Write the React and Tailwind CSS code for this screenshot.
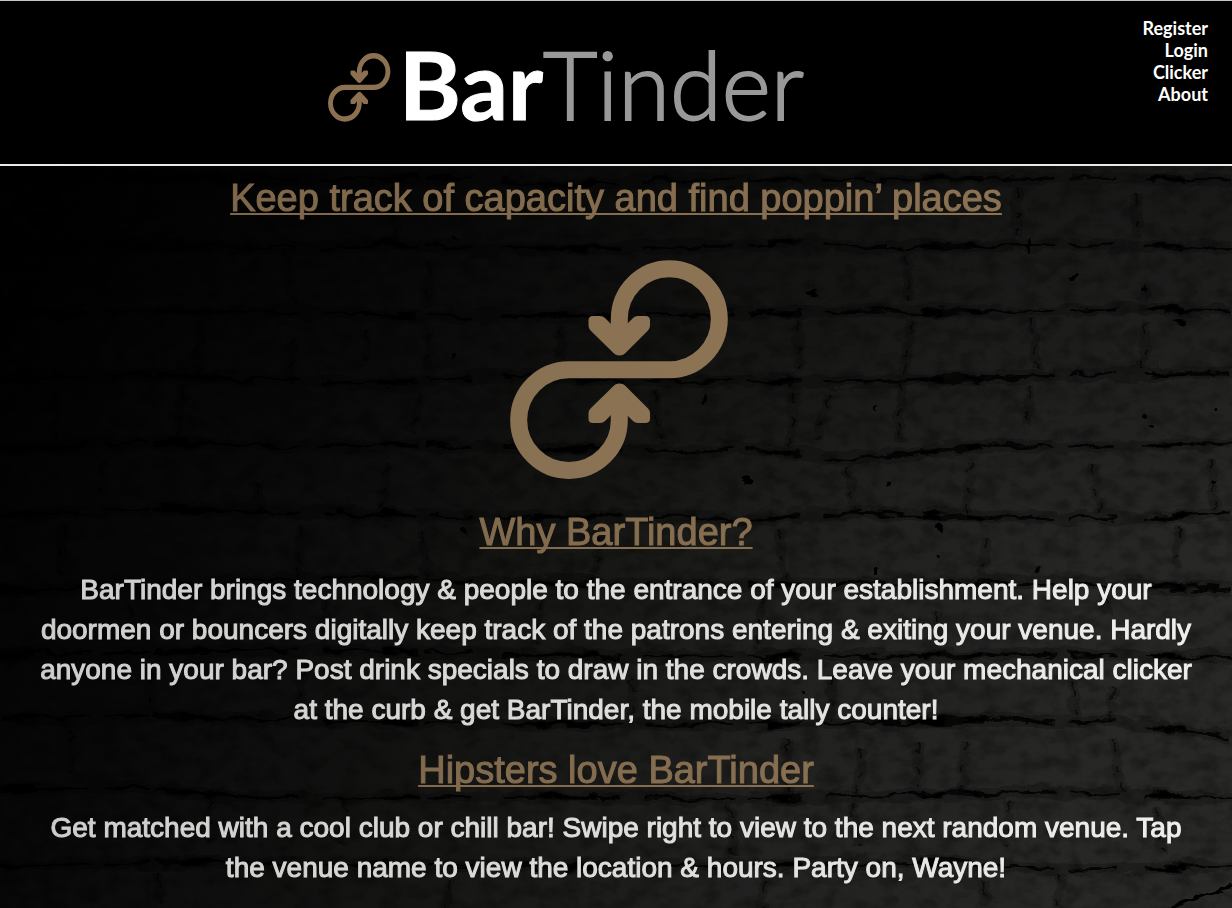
const NAV_LINKS = ["Register", "Login", "Clicker", "About"];

const COURSES = [
  "M0 181 L140 177 L300 180 L470 176 L560 186 L660 180 L790 181 L1075 178 L1232 180",
  "M0 247 L120 246 L330 248 L390 244 L480 250 L620 248 L740 246 L800 240 L860 248 L960 246 L1100 245 L1232 248",
  "M0 314 L150 311 L270 312 L350 314 L480 317 L620 315 L740 314 L880 311 L1030 312 L1140 308 L1232 311",
  "M0 380 L140 375 L280 380 L400 384 L500 375 L640 380 L760 382 L900 381 L1090 374 L1232 373",
  "M0 450 L100 443 L180 443 L310 447 L400 444 L520 448 L700 452 L740 447 L850 460 L990 445 L1100 448 L1232 443",
  "M0 516 L160 508 L270 513 L390 514 L500 517 L680 516 L740 521 L850 512 L990 517 L1150 518 L1232 514",
  "M0 591 L200 583 L340 577 L520 582 L720 586 L880 584 L1070 582 L1232 590",
  "M0 655 L200 651 L340 650 L490 654 L700 657 L900 656 L1080 654 L1232 658",
  "M0 719 L130 715 L250 719 L480 724 L690 724 L870 723 L1000 720 L1120 722 L1232 738",
  "M0 790 L130 788 L240 797 L340 798 L520 796 L700 799 L880 796 L1050 792 L1232 798",
  "M0 866 L180 862 L400 865 L700 866 L940 862 L1080 870 L1232 866",
];

const JOINTS = [
  "M395 186v54", "M1018 186v52", "M1134 196l4 40",
  "M286 252l8 54", "M430 262l-4 44", "M906 254l3 46", "M1146 284l-4 26",
  "M200 320l-2 54", "M295 335l-6 50", "M366 330v30", "M430 330l-2 50", "M562 325l-3 38", "M798 320l2 50", "M910 322l-6 52", "M1034 320l4 48", "M1146 322l-2 46",
  "M55 392v48", "M182 386l-4 58", "M422 392l-12 40", "M654 390l4 50", "M795 392l-4 56", "M829 395l-12 46", "M902 382l-4 60", "M1030 386l-4 40",
  "M104 462l-4 32", "M256 482l6 30", "M386 462l-4 48", "M848 466l6 44", "M972 462l-6 50", "M1095 462l4 50", "M1213 458l2 52",
  "M62 526v48", "M302 526l-6 54", "M420 530l8 46", "M600 530l-4 44", "M780 530l4 50", "M988 536l-6 40", "M1180 528l-4 38",
  "M130 602v40", "M326 600l-4 42", "M540 600l-4 46", "M762 592l-4 56", "M938 612l4 34", "M1107 592l-2 20",
  "M150 670v40", "M304 664l-6 50", "M632 680l2 34", "M830 676l4 44", "M1072 684l4 30", "M1114 686l-3 34",
  "M70 730v46", "M210 796v50", "M788 738l-4 40l8 24", "M862 746l-6 48", "M920 742l-4 46", "M966 742l-4 50", "M1112 740l10 50",
  "M346 800l-4 46", "M728 806l6 50", "M852 804l6 46", "M1010 802l-4 46", "M1158 806l2 46",
  "M160 872v36", "M450 880l-4 28", "M764 880l-2 28", "M982 882l4 26", "M1062 874l-4 34",
];

const PITS = [
  [1028, 244, 2, 8], [1074, 278, 2, 5], [1141, 415, 3, 3], [1150, 427, 2, 2], [1216, 411, 2, 2],
  [874, 409, 2, 2], [747, 481, 5, 5], [891, 486, 2, 2], [941, 528, 3, 4], [453, 239, 3, 2],
  [454, 358, 2, 4], [706, 400, 2, 5], [812, 292, 4, 2], [1214, 480, 3, 2], [936, 557, 2, 2],
  [1180, 320, 6, 3], [1144, 290, 4, 3], [803, 692, 2, 2], [860, 380, 3, 2], [876, 570, 2, 3],
  [694, 628, 2, 2], [1037, 570, 2, 4], [532, 870, 3, 3], [464, 530, 3, 4],
];

function LoopMark({ className }) {
  return (
    <svg
      viewBox="0 0 220 220"
      preserveAspectRatio="none"
      className={className}
      fill="none"
      aria-hidden="true"
    >
      <path
        d="M109.3 80V59.3a50 50.5 0 1 1 50 50.5H59.3a50.3 50.3 0 1 0 50 50.4V142"
        stroke="currentColor"
        strokeWidth="17"
      />
      <path
        d="M82.5 56h7.5q3 0 5 2l6 6h16l6-6q2-2 5-2h7.500q4.500 0 4.500 4.500v5q0 3-2 5L116 92.500q-2.500 3-6.500 3t-6.500-3L80.500 70.500q-2-2-2-5v-5q0-4.500 4-4.500Z"
        fill="currentColor"
      />
      <path
        d="M82.500 163h7.500q3 0 5-2l6-6h16l6 6q2 2 5 2h7.500q4.500 0 4.500-4.500v-5q0-3-2-5L116 126.500q-2.500-3-6.500-3t-6.500 3L80.500 148.500q-2 2-2 5v5q0 4.500 4 4.500Z"
        fill="currentColor"
      />
    </svg>
  );
}

function BrickWall() {
  return (
    <svg
      viewBox="0 166 1232 742"
      preserveAspectRatio="xMidYMin slice"
      className="absolute inset-0 h-full w-full"
      aria-hidden="true"
    >
      <defs>
        <linearGradient id="light" x1="0" y1="0.2" x2="1" y2="0.5">
          <stop offset="0" stopColor="#020202" />
          <stop offset="0.25" stopColor="#0b0b0b" />
          <stop offset="0.5" stopColor="#171716" />
          <stop offset="0.75" stopColor="#232322" />
          <stop offset="1" stopColor="#282827" />
        </linearGradient>
        <linearGradient id="shade" x1="0" y1="0" x2="0" y2="1">
          <stop offset="0" stopColor="#000" stopOpacity="0.35" />
          <stop offset="0.5" stopColor="#000" stopOpacity="0" />
          <stop offset="1" stopColor="#000" stopOpacity="0" />
        </linearGradient>
        <filter id="grain" x="0" y="0" width="100%" height="100%">
          <feTurbulence type="fractalNoise" baseFrequency="0.05 0.07" numOctaves="6" seed="8" />
          <feColorMatrix values="0 0 0 0 0  0 0 0 0 0  0 0 0 0 0  2.4 0 0 0 -1" />
        </filter>
        <filter id="rough" x="-5%" y="-5%" width="110%" height="110%">
          <feTurbulence type="fractalNoise" baseFrequency="0.04 0.09" numOctaves="5" seed="3" />
          <feDisplacementMap in="SourceGraphic" scale="13" xChannelSelector="R" yChannelSelector="G" />
          <feGaussianBlur stdDeviation="0.5" />
        </filter>
      </defs>
      <rect y="166" width="1232" height="742" fill="url(#light)" />
      <rect y="166" width="1232" height="742" filter="url(#grain)" opacity="0.3" />
      <g filter="url(#rough)" fill="none" stroke="#000">
        {COURSES.map((d) => (
          <g key={d}>
            <path d={d} strokeWidth="13" opacity="0.22" />
            <path d={d} strokeWidth="3" opacity="0.8" strokeDasharray="90 14 46 30 120 22" />
            <path d={d} strokeWidth="6" opacity="0.7" strokeDasharray="34 120 60 170" />
          </g>
        ))}
        {JOINTS.map((d) => (
          <g key={d}>
            <path d={d} strokeWidth="10" opacity="0.2" />
            <path d={d} strokeWidth="2" opacity="0.6" strokeDasharray="12 14 7 9" />
          </g>
        ))}
        <path d="M1170 908q30-14 62-22" strokeWidth="4" />
        {PITS.map(([x, y, rx, ry]) => (
          <ellipse key={`${x}-${y}`} cx={x} cy={y} rx={rx} ry={ry} fill="#000" stroke="none" />
        ))}
      </g>
      <rect y="166" width="1232" height="742" fill="url(#shade)" />
    </svg>
  );
}

function SectionTitle({ as: Tag = "h2", children }) {
  return (
    <Tag className="text-[38px] leading-10 text-[#8f7555] underline decoration-2 underline-offset-2 [text-decoration-skip-ink:none] [-webkit-text-stroke:1px_#8f7555]">
      {children}
    </Tag>
  );
}

function Copy({ children }) {
  return (
    <p className="text-[28px] leading-10 text-[#f0f0ef] [-webkit-text-stroke:1px_#f0f0ef]">
      {children}
    </p>
  );
}

function Section({ title, children }) {
  return (
    <section className="flex flex-col items-center gap-[18px]">
      <SectionTitle>{title}</SectionTitle>
      <Copy>{children}</Copy>
    </section>
  );
}

export default function App() {
  return (
    <div className="flex min-h-screen flex-col bg-black font-['Liberation_Sans',Arial,sans-serif]">
      <header className="grid grid-cols-[1fr_auto_1fr] border-t border-b-2 border-t-[#c4c8c8] border-b-[#e6ebe6] bg-black pt-4 pb-[42px] font-['Lato',sans-serif]">
        <span />
        <a href="#home" className="mr-[100px] flex items-center gap-2 pt-9">
          <LoopMark className="h-[69px] w-[63px] text-[#8b7152]" />
          <span className="pb-2 text-[94px] leading-[50px] whitespace-nowrap">
            <span className="font-bold text-white [-webkit-text-stroke:1px_#fff]">Bar</span>
            <span className="font-light text-[#999] [-webkit-text-stroke:2px_#999]">Tinder</span>
          </span>
        </a>
        <nav className="flex flex-col items-end pr-6 text-lg leading-[22px] font-bold text-white">
          {NAV_LINKS.map((label) => (
            <a key={label} href={`#${label.toLowerCase()}`}>
              {label}
            </a>
          ))}
        </nav>
      </header>

      <main className="relative isolate grow">
        <div className="absolute inset-0 -z-10 overflow-hidden">
          <BrickWall />
        </div>
        <div className="flex flex-col items-center px-8 pt-3 pb-4 text-center">
          <SectionTitle as="h1">Keep track of capacity and find poppin’ places</SectionTitle>
          <LoopMark className="mt-[42px] ml-2 h-[220px] w-[220px] text-[#957b5a]" />
          <div className="mt-8 flex flex-col gap-5">
            <Section title="Why BarTinder?">
              BarTinder brings technology &amp; people to the entrance of your establishment. Help
              your doormen or bouncers digitally keep track of the patrons entering &amp; exiting
              your venue. Hardly anyone in your bar? Post drink specials to draw in the crowds.
              Leave your mechanical clicker at the curb &amp; get BarTinder, the mobile tally
              counter!
            </Section>
            <Section title="Hipsters love BarTinder">
              Get matched with a cool club or chill bar! Swipe right to view to the next random
              venue. Tap the venue name to view the location &amp; hours. Party on, Wayne!
            </Section>
          </div>
        </div>
        <div className="pointer-events-none absolute inset-0 bg-linear-to-r from-black/15 to-transparent" />
      </main>
    </div>
  );
}
